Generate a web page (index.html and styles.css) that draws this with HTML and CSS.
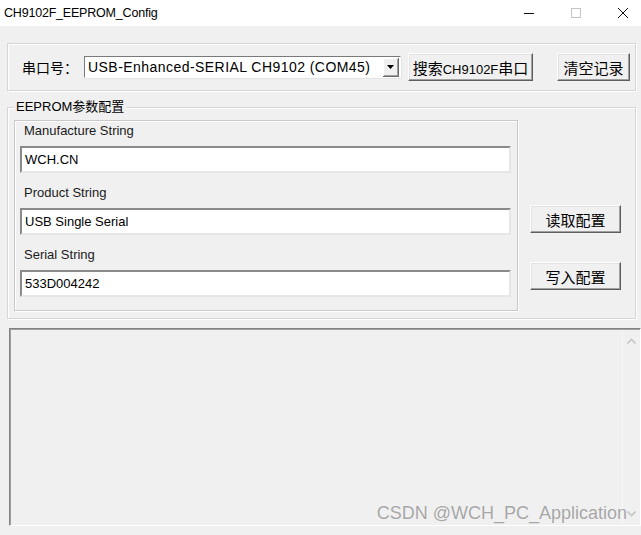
FILE: index.html
```html
<!DOCTYPE html>
<html lang="zh-CN">
  <head>
    <meta charset="UTF-8" />
    <title>CH9102F_EEPROM_Config</title>
    <link rel="stylesheet" href="styles.css">
  </head>
  <body>
    <div class="titlebar">
      <span class="title">CH9102F_EEPROM_Config</span>
      <div class="win-controls">
        <span class="ctl">
          <svg width="12" height="12" viewBox="0 0 12 12"><path d="M1 6.5h10" stroke="#111" stroke-width="1"/></svg>
        </span>
        <span class="ctl">
          <svg width="12" height="12" viewBox="0 0 12 12"><rect x="1.5" y="1.5" width="9" height="9" fill="none" stroke="#c4c4c4" stroke-width="1"/></svg>
        </span>
        <span class="ctl">
          <svg width="12" height="12" viewBox="0 0 12 12"><path d="M1 1l10 10M11 1L1 11" stroke="#111" stroke-width="1"/></svg>
        </span>
      </div>
    </div>

    <div class="main">
      <div class="group port-group">
        <span class="port-label">串口号：</span>
        <div class="combo">
          <span class="combo-text">USB-Enhanced-SERIAL CH9102 (COM45)</span>
          <span class="combo-btn">
            <svg width="7" height="4" viewBox="0 0 7 4"><path d="M0 0h7L3.5 4z" fill="#000"/></svg>
          </span>
        </div>
        <button class="btn btn-search">搜索<span class="latin">CH9102F</span>串口</button>
        <button class="btn btn-clear">清空记录</button>
      </div>

      <div class="group eeprom-group">
        <span class="legend">EEPROM参数配置</span>
        <div class="fields">
          <div class="field-label first">Manufacture String</div>
          <div class="edit">WCH.CN</div>
          <div class="field-label">Product String</div>
          <div class="edit">USB Single Serial</div>
          <div class="field-label">Serial String</div>
          <div class="edit">533D004242</div>
        </div>
        <div class="actions">
          <button class="btn btn-action">读取配置</button>
          <button class="btn btn-action">写入配置</button>
        </div>
      </div>

      <div class="output">
        <div class="output-body"></div>
        <div class="scrollbar">
          <svg width="9" height="6" viewBox="0 0 9 6"><path d="M0.5 5.5L4.5 1.5L8.5 5.5" fill="none" stroke="#c6c6c6" stroke-width="1.6"/></svg>
          <svg width="9" height="6" viewBox="0 0 9 6"><path d="M0.5 0.5L4.5 4.5L8.5 0.5" fill="none" stroke="#c6c6c6" stroke-width="1.6"/></svg>
        </div>
        <span class="watermark">CSDN @WCH_PC_Application</span>
      </div>
    </div>
  </body>
</html>
```

FILE: styles.css
```css
body {
  margin: 0;
  padding: 0;
  width: 641px;
  height: 535px;
  overflow: hidden;
  background-color: #f0f0f0;
  font-family: "Liberation Sans", "Noto Sans CJK SC", sans-serif;
  font-size: 13px;
  color: #000;
}

/* window title bar */
.titlebar {
  height: 26px;
  background-color: #ffffff;
  display: flex;
  align-items: center;
  justify-content: space-between;
}

.title {
  padding-left: 4px;
  font-size: 12.5px;
  letter-spacing: -0.2px;
  color: #000;
}

.win-controls {
  display: flex;
  height: 26px;
  margin-right: -5px;
}

.ctl {
  width: 47px;
  display: flex;
  align-items: center;
  justify-content: center;
}

.main {
  padding: 17px 0 0 7px;
}

/* etched group box */
.group {
  position: relative;
  width: 627px;
  border: 1px solid #d5d5d5;
  box-shadow: inset 1px 1px 0 #ffffff, 1px 1px 0 #ffffff;
}

.port-group {
  height: 46px;
  display: flex;
  align-items: center;
}

.port-label {
  margin-left: 14px;
  width: 62px;
  font-size: 14px;
}

.combo {
  width: 315px;
  height: 20px;
  display: flex;
  align-items: center;
  background-color: #ffffff;
  border: 1px solid #7a7a7a;
  border-right-color: #ffffff;
  border-bottom-color: #ffffff;
  box-shadow: 1px 1px 0 #e3e3e3;
}

.combo-text {
  flex: 1;
  padding-left: 3px;
  font-size: 14px;
  letter-spacing: 0.45px;
  white-space: nowrap;
}

.combo-btn {
  width: 15px;
  height: 18px;
  margin-right: 1px;
  display: flex;
  align-items: center;
  justify-content: center;
  background-color: #f0f0f0;
  border-right: 1px solid #696969;
  border-bottom: 1px solid #696969;
  box-shadow: inset 1px 1px 0 #ffffff, inset -1px -1px 0 #a0a0a0;
}

/* classic raised button */
.btn {
  height: 28px;
  padding: 0;
  background-color: #f0f0f0;
  font-family: "Noto Sans CJK SC", sans-serif;
  font-size: 15px;
  color: #000;
  border: 1px solid;
  border-color: #ffffff #5e5e5e #5e5e5e #ffffff;
  box-shadow: inset -1px -1px 0 #a0a0a0, inset 1px 1px 0 #e3e3e3;
  border-radius: 0;
}

.btn-search {
  margin-left: 7px;
  width: 125px;
}

.btn-search .latin {
  font-family: "Liberation Sans", sans-serif;
  font-size: 13px;
}

.btn-clear {
  margin-left: 24px;
  width: 73px;
}

.eeprom-group {
  margin-top: 16px;
  height: 210px;
  display: flex;
}

.legend {
  position: absolute;
  top: -9px;
  left: 6px;
  padding: 0 2px 0 2px;
  background-color: #f0f0f0;
  font-size: 13px;
  line-height: 16px;
}

.fields {
  margin: 12px 0 0 6px;
  border: 1px solid #c8c8c8;
  box-shadow: inset 1px 1px 0 #ffffff, 1px 1px 0 #ffffff;
  padding: 0 6px 0 5px;
  box-sizing: border-box;
  width: 504px;
  height: 191px;
}

.field-label {
  margin: 12px 0 7px 4px;
  line-height: 16px;
  color: #1a1a1a;
}

.field-label.first {
  margin-top: 2px;
}

.edit {
  height: 23px;
  width: 484px;
  line-height: 23px;
  padding-left: 3px;
  background-color: #ffffff;
  border: 2px solid;
  border-color: #8a8a8a #e6e6e6 #e6e6e6 #8a8a8a;
  font-size: 13px;
}

.actions {
  margin: 97px 0 0 12px;
  display: flex;
  flex-direction: column;
  gap: 29px;
}

.btn-action {
  width: 91px;
}

/* log output area */
.output {
  position: relative;
  margin: 9px 0 0 2px;
  width: 630px;
  height: 196px;
  display: flex;
  border: 1px solid;
  border-color: #828282 #ffffff #ffffff #828282;
  box-shadow: inset 1px 1px 0 #a0a0a0;
}

.output-body {
  flex: 1;
}

.scrollbar {
  width: 17px;
  margin: 1px 0;
  display: flex;
  flex-direction: column;
  justify-content: space-between;
  align-items: center;
  padding: 8px 0 7px 0;
  border-left: 1px solid #f7f7f7;
}

.watermark {
  position: absolute;
  right: 13px;
  bottom: 1px;
  font-family: "Liberation Sans", sans-serif;
  font-size: 18px;
  letter-spacing: 0;
  color: #a6a6a6;
  text-shadow: 0 0 1px #ffffff;
}
```
